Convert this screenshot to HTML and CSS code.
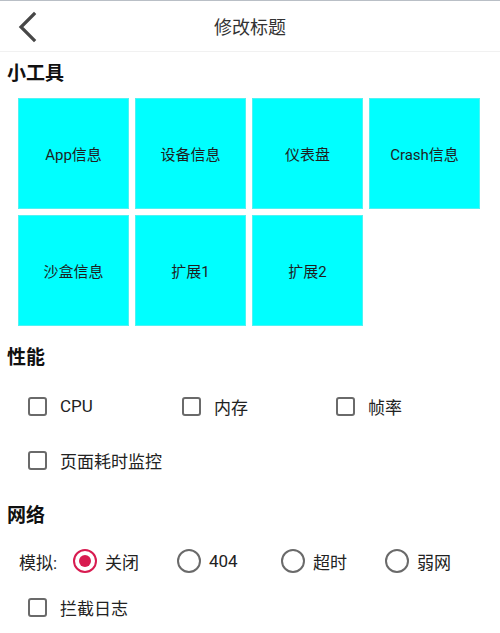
FILE: index.html
```html
<!DOCTYPE html>
<html lang="zh">
<head>
<meta charset="utf-8">
<title>修改标题</title>
<link rel="stylesheet" href="styles.css">
</head>
<body>
<div class="topline"></div>
<header class="bar">
  <div class="back">
    <svg width="50" height="50" viewBox="0 0 50 50"><polyline points="34,13 21,26 34,39" fill="none" stroke="#474747" stroke-width="3.2" stroke-linecap="square"/></svg>
  </div>
  <div class="title">修改标题</div>
  <div></div>
</header>

<h2 class="sec sec-tools">小工具</h2>
<div class="tiles">
  <div class="tile">App信息</div>
  <div class="tile">设备信息</div>
  <div class="tile">仪表盘</div>
  <div class="tile">Crash信息</div>
  <div class="tile">沙盒信息</div>
  <div class="tile">扩展1</div>
  <div class="tile">扩展2</div>
</div>

<h2 class="sec sec-perf">性能</h2>
<div class="checks">
  <label class="chk"><span class="box"></span>CPU</label>
  <label class="chk"><span class="box"></span>内存</label>
  <label class="chk"><span class="box"></span>帧率</label>
  <label class="chk"><span class="box"></span>页面耗时监控</label>
</div>

<h2 class="sec sec-net">网络</h2>
<div class="radios">
  <span class="rlabel">模拟:</span>
  <label class="rad"><span class="ring on"></span>关闭</label>
  <label class="rad"><span class="ring"></span>404</label>
  <label class="rad"><span class="ring"></span>超时</label>
  <label class="rad"><span class="ring"></span>弱网</label>
</div>
<div class="checks checks-net">
  <label class="chk"><span class="box"></span>拦截日志</label>
</div>
</body>
</html>
```

FILE: styles.css
```css
html, body {
  margin: 0;
  padding: 0;
  background: #ffffff;
  font-family: Roboto, "Noto Sans CJK SC", sans-serif;
  color: #222222;
}

.topline {
  height: 1px;
  background: #b9bfc6;
}

.bar {
  height: 50px;
  display: grid;
  grid-template-columns: 50px 1fr 50px;
  align-items: center;
  border-bottom: 1px solid #f1f1f1;
}

.back {
  height: 50px;
}

.back svg {
  display: block;
}

.title {
  text-align: center;
  font-size: 18px;
  color: #333333;
}

.sec {
  margin: 0;
  padding-left: 7px;
  height: 36px;
  line-height: 36px;
  font-size: 19px;
  font-weight: bold;
  color: #111111;
}

.sec-tools { margin-top: 4px; }
.sec-perf { margin-top: 14px; }
.sec-net { margin-top: 11px; }

.tiles {
  margin-top: 6px;
  padding-left: 18px;
  display: grid;
  grid-template-columns: repeat(4, 111px);
  grid-auto-rows: 111px;
  gap: 6px;
}

.tile {
  background: #00ffff;
  box-shadow: inset 0 0 0 1px #4ff3f3;
  display: flex;
  align-items: center;
  justify-content: center;
  font-size: 15px;
  color: #1e1e1e;
}

.checks {
  margin-top: 3px;
  padding-left: 28px;
  display: grid;
  grid-template-columns: repeat(3, 154px);
  grid-auto-rows: 54px;
}

.checks-net {
  margin-top: 0;
  grid-auto-rows: 46px;
}

.chk {
  display: flex;
  align-items: center;
  gap: 13px;
  font-size: 17px;
  color: #222222;
}

.box {
  width: 15px;
  height: 15px;
  border: 2px solid #6a6a6a;
  border-radius: 3px;
  flex: none;
}

.radios {
  margin-top: 4px;
  height: 46px;
  padding-left: 19px;
  display: grid;
  grid-template-columns: 54px repeat(4, 104px);
  align-items: center;
  font-size: 17px;
}

.rlabel {
  color: #222222;
}

.rad {
  display: flex;
  align-items: center;
  gap: 8px;
}

.ring {
  width: 20px;
  height: 20px;
  border: 2px solid #6a6a6a;
  border-radius: 50%;
  flex: none;
  display: flex;
  align-items: center;
  justify-content: center;
}

.ring.on {
  border-color: #d81b50;
}

.ring.on::after {
  content: "";
  width: 12px;
  height: 12px;
  border-radius: 50%;
  background: #d81b50;
}
```
